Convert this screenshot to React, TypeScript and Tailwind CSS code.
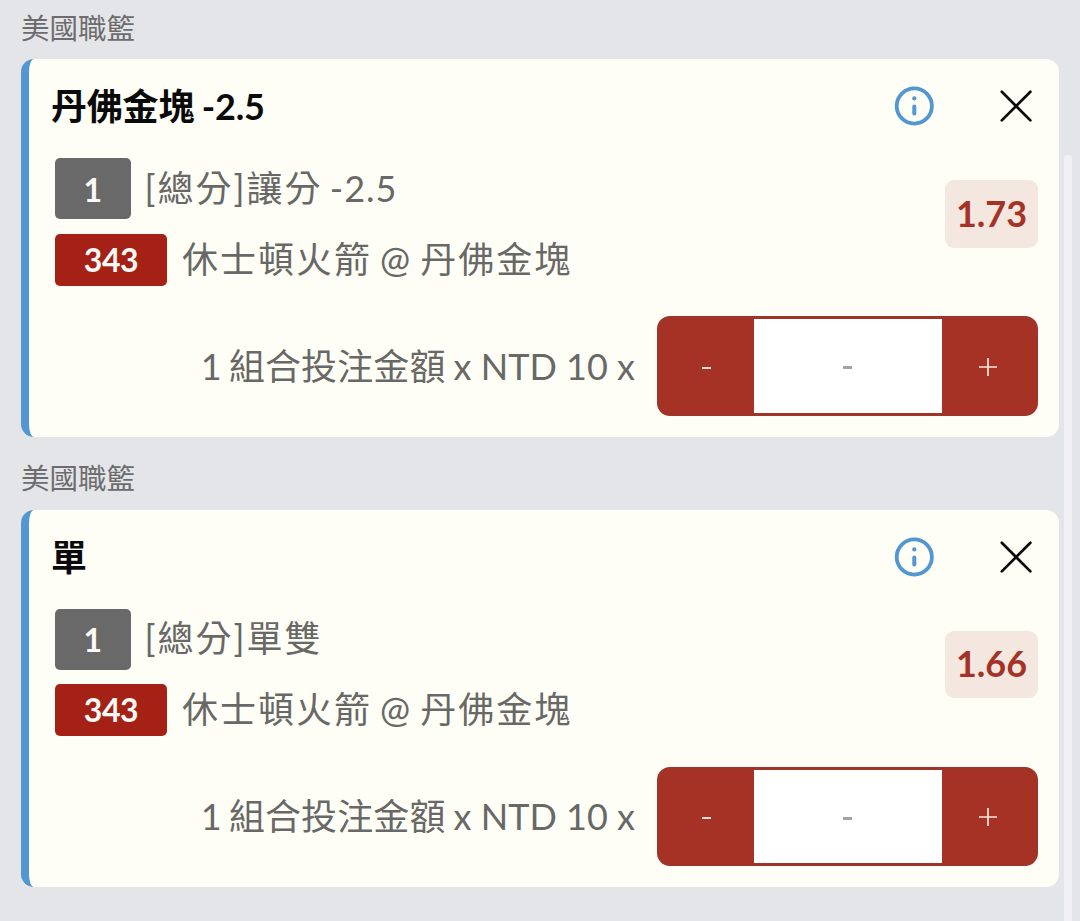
type Bet = {
  league: string;
  title: string;
  market: string;
  line?: string;
  odds: string;
};

const bets: Bet[] = [
  { league: '美國職籃', title: '丹佛金塊 -2.5', market: '[總分]讓分', line: '-2.5', odds: '1.73' },
  { league: '美國職籃', title: '單', market: '[總分]單雙', odds: '1.66' },
];

function InfoIcon() {
  return (
    <svg width="40" height="40" viewBox="0 0 40 40" fill="none" stroke="#5296d2" strokeLinecap="round">
      <circle cx="20.3" cy="20" r="17.6" strokeWidth="3.8" />
      <path d="M20.3 20.4v7" strokeWidth="4" />
      <circle cx="20.3" cy="12.4" r="2.1" fill="#5296d2" stroke="none" />
    </svg>
  );
}

function CloseIcon() {
  return (
    <svg width="32" height="32" viewBox="0 0 32 32" fill="none" stroke="#0a0a0a" strokeWidth="2.7" strokeLinecap="round">
      <path d="M1.8 1.8l28.6 28.6M30.4 1.8L1.8 30.4" />
    </svg>
  );
}

function Stepper() {
  return (
    <div className="flex h-[99.5px] w-[381px] overflow-hidden rounded-[13px] border-[3px] border-[#a03429] bg-[#a63225]">
      <button className="flex w-[94px] items-center justify-center">
        <span className="mr-[1px] h-[2px] w-[9px] translate-y-[2px] bg-[#f3dcd7]" />
      </button>
      <div className="flex flex-1 items-center justify-center bg-white">
        <span className="mr-[2px] h-[3px] w-[9px] translate-y-[2px] bg-[#a3a3a3]" />
      </div>
      <button className="flex w-[93px] items-center justify-center">
        <svg width="18" height="18" viewBox="0 0 18 18" stroke="#f8e4df" strokeWidth="1.7" className="mr-[2px] translate-y-[1px]">
          <path d="M9 0v18M0 9h18" />
        </svg>
      </button>
    </div>
  );
}

function BetCard({ bet }: { bet: Bet }) {
  return (
    <section className="h-[450.5px]">
      <h2 className="flex h-[59px] items-center pb-[3px] text-[28.5px] leading-none text-[#6c6c6e]">{bet.league}</h2>
      <div className="h-[377.5px] w-[1038px] rounded-[13px] border-l-8 border-[#5296d2] bg-[#fefef6] pr-[21px] text-[#686866]">
        <div className="flex h-[94px] items-center pl-[22px]">
          <h3 className="flex-1 text-[36px] font-bold leading-none tracking-[-0.2px] text-[#0a0a0a] [word-spacing:-1px]">
            {bet.title}
          </h3>
          <button className="mr-[66px]">
            <InfoIcon />
          </button>
          <button className="mr-[6px]">
            <CloseIcon />
          </button>
        </div>
        <div className="flex justify-between pl-[26px] pt-[5px]">
          <div className="flex flex-col gap-[14.5px]">
            <div className="flex h-[61px] items-center">
              <span className="mr-[14px] flex h-full w-[75.5px] items-center justify-center rounded-[5px] bg-[#696969] pt-[2px] text-[32px] font-bold text-[#fafaf8]">
                1
              </span>
              <span className="whitespace-nowrap pb-[2px] text-[36px] leading-none tracking-[2px] [word-spacing:-3px]">
                {bet.market}
                {bet.line && <span className="tracking-[1px]"> {bet.line}</span>}
              </span>
            </div>
            <div className="flex h-[52px] items-center">
              <span className="mr-[15px] flex h-full w-[112px] items-center justify-center rounded-[5px] bg-[#a52015] text-[32px] font-bold tracking-[-0.4px] text-[#fafaf8]">
                343
              </span>
              <span className="whitespace-nowrap pb-[2px] text-[36px] leading-none tracking-[2px] [word-spacing:-3.2px]">
                休士頓火箭 @ 丹佛金塊
              </span>
            </div>
          </div>
          <span className="mt-[22px] flex h-[67.5px] w-[93px] items-center justify-center rounded-[9px] bg-[#f4e7e0] pb-[2px] text-[36px] font-bold text-[#a53226]">
            {bet.odds}
          </span>
        </div>
        <div className="flex items-center justify-end gap-[22px] pt-[30.5px]">
          <span className="whitespace-nowrap text-[36px] leading-none">
            <span className="mr-[1px] tracking-[0.1px] [word-spacing:-2.2px]">1 組合投注金額 </span>
            x NTD 10 x
          </span>
          <Stepper />
        </div>
      </div>
    </section>
  );
}

export default function App() {
  return (
    <main className="flex h-[921px] w-[1080px] overflow-hidden bg-[#e4e5e8] font-[Lato,'Noto_Sans_CJK_TC',sans-serif]">
      <div className="pl-[21px]">
        {bets.map((bet) => (
          <BetCard key={bet.title} bet={bet} />
        ))}
      </div>
      <div className="ml-[5px] mt-[155px] w-2 rounded-t-full bg-[#f1f1f5]" />
    </main>
  );
}
